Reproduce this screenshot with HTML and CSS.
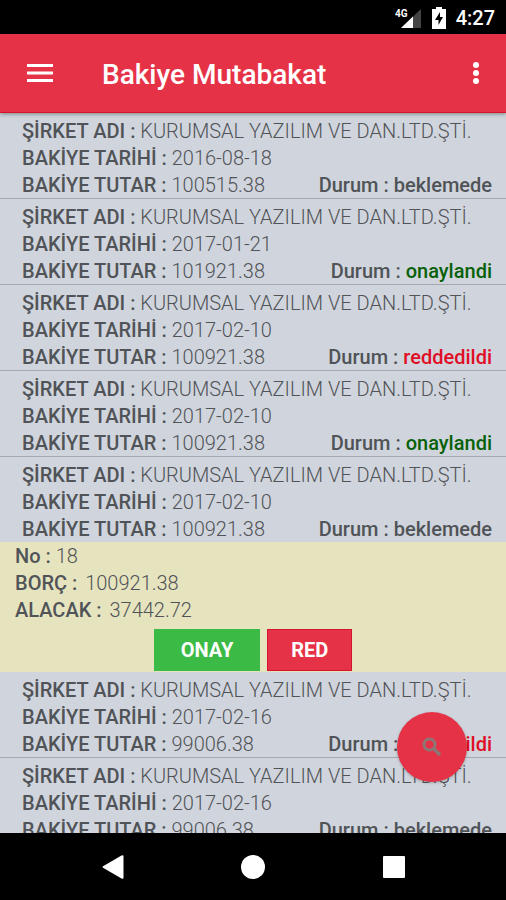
FILE: index.html
```html
<!DOCTYPE html>
<html lang="tr">
<head>
<meta charset="utf-8">
<meta name="viewport" content="width=device-width, initial-scale=1">
<title>Bakiye Mutabakat</title>
<link rel="stylesheet" href="styles.css">
</head>
<body>
<div class="status-bar">
  <svg class="signal" viewBox="0 0 28 24" aria-hidden="true">
    <path d="M6 22 L26 3 V22 Z" fill="#444"/>
    <path d="M6 22 L18 10.600 V22 Z" fill="#fff"/>
    <text class="network" x="0" y="11">4G</text>
  </svg>
  <svg class="battery" viewBox="0 0 14 22" aria-hidden="true">
    <path d="M4 0 H10 V2 H14 V22 H0 V2 H4 Z" fill="#fff"/>
    <path d="M8 5 L3 13 H6.500 V18 L11 10 H8 Z" fill="#000"/>
  </svg>
  <span class="clock">4:27</span>
</div>
<header class="app-bar">
  <button class="icon-button" aria-label="Menü">
    <svg width="28" height="22" viewBox="0 0 28 22"><path d="M1 3.500H27M1 11H27M1 18.500H27" stroke="#fff" stroke-width="3"/></svg>
  </button>
  <h1>Bakiye Mutabakat</h1>
  <button class="icon-button" aria-label="Seçenekler">
    <svg width="8" height="24" viewBox="0 0 8 24" fill="#fff"><circle cx="4" cy="4" r="3"/><circle cx="4" cy="12" r="3"/><circle cx="4" cy="20" r="3"/></svg>
  </button>
</header>
<main>
  <div class="list">
    <article class="row">
      <p><b>ŞİRKET ADI :</b> KURUMSAL YAZILIM VE DAN.LTD.ŞTİ.</p>
      <p><b>BAKİYE TARİHİ :</b> 2016-08-18</p>
      <div class="total"><p><b>BAKİYE TUTAR :</b> 100515.38</p><p class="state">Durum : beklemede</p></div>
    </article>
    <article class="row">
      <p><b>ŞİRKET ADI :</b> KURUMSAL YAZILIM VE DAN.LTD.ŞTİ.</p>
      <p><b>BAKİYE TARİHİ :</b> 2017-01-21</p>
      <div class="total"><p><b>BAKİYE TUTAR :</b> 101921.38</p><p class="state">Durum : <strong class="approved">onaylandi</strong></p></div>
    </article>
    <article class="row">
      <p><b>ŞİRKET ADI :</b> KURUMSAL YAZILIM VE DAN.LTD.ŞTİ.</p>
      <p><b>BAKİYE TARİHİ :</b> 2017-02-10</p>
      <div class="total"><p><b>BAKİYE TUTAR :</b> 100921.38</p><p class="state">Durum : <strong class="rejected">reddedildi</strong></p></div>
    </article>
    <article class="row">
      <p><b>ŞİRKET ADI :</b> KURUMSAL YAZILIM VE DAN.LTD.ŞTİ.</p>
      <p><b>BAKİYE TARİHİ :</b> 2017-02-10</p>
      <div class="total"><p><b>BAKİYE TUTAR :</b> 100921.38</p><p class="state">Durum : <strong class="approved">onaylandi</strong></p></div>
    </article>
    <article class="row open">
      <p><b>ŞİRKET ADI :</b> KURUMSAL YAZILIM VE DAN.LTD.ŞTİ.</p>
      <p><b>BAKİYE TARİHİ :</b> 2017-02-10</p>
      <div class="total"><p><b>BAKİYE TUTAR :</b> 100921.38</p><p class="state">Durum : beklemede</p></div>
    </article>
    <section class="detail">
      <p><b>No :</b> 18</p>
      <p><b class="amount">BORÇ :</b> 100921.38</p>
      <p><b class="amount">ALACAK :</b> 37442.72</p>
      <div class="actions">
        <button class="approve">ONAY</button>
        <button class="reject">RED</button>
      </div>
    </section>
    <article class="row">
      <p><b>ŞİRKET ADI :</b> KURUMSAL YAZILIM VE DAN.LTD.ŞTİ.</p>
      <p><b>BAKİYE TARİHİ :</b> 2017-02-16</p>
      <div class="total"><p><b>BAKİYE TUTAR :</b> 99006.38</p><p class="state">Durum : <strong class="rejected">reddedildi</strong></p></div>
    </article>
    <article class="row">
      <p><b>ŞİRKET ADI :</b> KURUMSAL YAZILIM VE DAN.LTD.ŞTİ.</p>
      <p><b>BAKİYE TARİHİ :</b> 2017-02-16</p>
      <div class="total"><p><b>BAKİYE TUTAR :</b> 99006.38</p><p class="state">Durum : beklemede</p></div>
    </article>
  </div>
  <button class="fab" aria-label="Ara">
    <svg width="20" height="20" viewBox="0 0 20 20" fill="none" stroke="#8b7776"><circle cx="7.500" cy="7.500" r="5.500" stroke-width="3"/><path d="M11.500 11.500L18 18" stroke-width="3.500"/></svg>
  </button>
</main>
<nav class="nav-bar">
  <button aria-label="Geri"><svg width="24" height="24" viewBox="0 0 24 24" fill="#fff"><path d="M3 11.200L21.500 .5Q23.500 -.3 23.500 1.500V22.500Q23.500 24.300 21.500 23.500L3 12.800Q2 12 3 11.200Z"/></svg></button>
  <button aria-label="Ana ekran"><svg width="24" height="24" viewBox="0 0 24 24" fill="#fff"><circle cx="12" cy="12" r="12"/></svg></button>
  <button aria-label="Son uygulamalar"><svg width="24" height="24" viewBox="0 0 24 24" fill="#fff"><rect x="1" y="1" width="22" height="22" rx="1"/></svg></button>
</nav>
</body>
</html>
```
FILE: styles.css
```css
* {
  box-sizing: border-box;
}

body {
  margin: 0;
  height: 100vh;
  display: flex;
  flex-direction: column;
  overflow: hidden;
  background: #000;
  color: #505357;
  font: 300 20px/23px Roboto, sans-serif;
}

p,
h1 {
  margin: 0;
}

button {
  border: 0;
  padding: 0;
  color: #fff;
  font: inherit;
  cursor: pointer;
}

b,
strong {
  font-weight: 500;
}

.status-bar {
  flex: none;
  height: 34px;
  padding: 2px 11px 0;
  display: flex;
  align-items: center;
  justify-content: flex-end;
  color: #fff;
}

.signal {
  width: 28px;
  height: 24px;
  margin-right: 9px;
}

.network {
  font: 700 10px Roboto, sans-serif;
  fill: #fff;
}

.battery {
  width: 14px;
  height: 22px;
  margin-right: 10px;
}

.clock {
  font-weight: 500;
}

.app-bar {
  flex: none;
  height: 79px;
  padding: 0 12px;
  display: flex;
  align-items: center;
  z-index: 1;
  color: #fff;
  background: #e63246;
  border-bottom: 1px solid #d51430;
  box-shadow: 0 1px 4px rgba(0, 0, 0, 0.4);
}

.icon-button {
  width: 56px;
  height: 56px;
  display: grid;
  place-items: center;
  background: none;
}

.app-bar .icon-button:last-child {
  width: 36px;
}

h1 {
  flex: 1;
  padding: 3px 0 0 34px;
  font-size: 28px;
  line-height: 32px;
  font-weight: 500;
}

main {
  flex: 1;
  min-height: 0;
  position: relative;
  background: #d0d5dd;
}

.list {
  height: 100%;
  overflow: hidden;
}

.row {
  display: grid;
  gap: 4px;
  padding: 7px 14px 1px 22px;
  border-bottom: 1px solid #a5a9ae;
}

.row.open {
  border-bottom: 0;
}

.total {
  display: flex;
  justify-content: space-between;
}

.state {
  font-weight: 500;
}

.approved {
  color: #086108;
}

.rejected {
  color: #e00d25;
}

.detail {
  display: grid;
  gap: 4px;
  padding: 3px 15px 1px;
  background: #e6e4bf;
}

.amount {
  margin-right: 3px;
}

.actions {
  display: flex;
  justify-content: center;
  gap: 7px;
  padding-top: 3px;
}

.actions button {
  height: 42px;
  padding: 0 23px;
  font-weight: 700;
}

.actions .approve {
  padding: 0 27px;
  background: #3bbb46;
}

.actions .reject {
  background: #e63246;
  border: 1px solid #d51430;
}

.fab {
  position: absolute;
  right: 39px;
  bottom: 51px;
  width: 70px;
  height: 70px;
  display: grid;
  place-items: center;
  border-radius: 50%;
  background: #e63246;
  box-shadow: 0 1px 3px rgba(0, 0, 0, 0.25);
}

.nav-bar {
  flex: none;
  height: 67px;
  display: flex;
  justify-content: center;
  gap: 93px;
}

.nav-bar button {
  width: 48px;
  display: grid;
  place-items: center;
  background: none;
}
```
